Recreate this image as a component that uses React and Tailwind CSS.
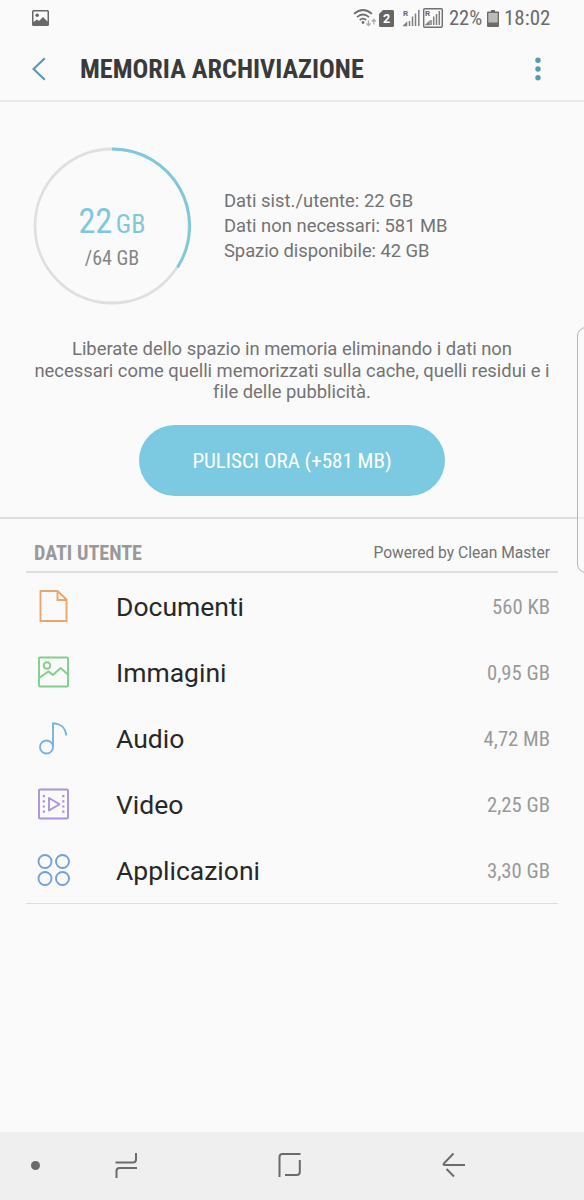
const condensed = "font-['Roboto_Condensed','Roboto',sans-serif] [font-stretch:75%]";

function PictureIcon() {
  return (
    <svg width="18" height="17" viewBox="0 0 18 17">
      <path fillRule="evenodd" fill="#686868" d="M1.5 0h14A1.5 1.5 0 0 1 17 1.500v13a1.500 1.500 0 0 1-1.500 1.500h-14A1.500 1.500 0 0 1 0 14.500v-13A1.500 1.500 0 0 1 1.500 0zM1.500 1.500v10.500l3.500-2.500 2 1.500 4-4 4.500 4.500v-10z" />
      <circle cx="5.200" cy="5.200" r="1.800" fill="#686868" />
    </svg>
  );
}

function WifiIcon() {
  return (
    <svg width="24" height="18" viewBox="0 0 24 18" fill="none" stroke="#707070" strokeWidth="1.700">
      <path d="M1 4.800Q10-2.800 19 4.800M4 8.200Q10 2.800 16 8.200M6.800 11Q10 8.200 13.200 11" />
      <circle cx="10" cy="13.500" r="1.400" fill="#707070" stroke="none" />
      <path d="M15.500 11.500v5m-2-2 2 2 2-2M20.800 15.500v-5m-2 2 2-2 2 2" stroke="#aaa" strokeWidth="1.300" />
    </svg>
  );
}

function Signal({ boxed }) {
  return (
    <svg width="20" height="20" viewBox="0 0 20 20" fill="none">
      {boxed && <rect x=".7" y=".7" width="18.600" height="18.600" rx="1" stroke="#707070" strokeWidth="1.400" />}
      <text x={boxed ? 2 : 0} y="8" fontSize="8" fontWeight="700" fontFamily="Roboto, sans-serif" fill="#666">R</text>
      <path d={boxed ? "M3.500 16.500h2.500v-2.500zM8 17v-5M10.700 17V8.500M13.500 17V6M16.300 17V3" : "M1 17.500h2.500v-2.500zM6.500 18v-5M9.500 18v-9.500M12.500 18V5.500M15.800 18V2"} stroke="#808080" strokeWidth="1.500" />
    </svg>
  );
}

function StatusBar() {
  return (
    <div className="flex h-9 items-center pl-8 pr-[33px]">
      <PictureIcon />
      <div className="ml-auto flex items-center text-[#6b6b6b]">
        <WifiIcon />
        <svg className="ml-0.5" width="15" height="17" viewBox="0 0 15 17">
          <path d="M4 0h9.500A1.500 1.500 0 0 1 15 1.500v14a1.500 1.500 0 0 1-1.500 1.500h-12A1.500 1.500 0 0 1 0 15.500V4z" fill="#666" />
          <text x="7.500" y="13" textAnchor="middle" fontSize="12.500" fontWeight="700" fontFamily="Roboto, sans-serif" fill="#fff">2</text>
        </svg>
        <div className="ml-[9px]"><Signal /></div>
        <Signal boxed />
        <span className={`${condensed} ml-1.5 w-[33px] whitespace-nowrap text-[20.500px] leading-none`}>22%</span>
        <svg className="ml-[5px]" width="12" height="17" viewBox="0 0 12 17">
          <path d="M4 0h4v1.500h3q1 0 1 1V16q0 1-1 1H1q-1 0-1-1V2.500q0-1 1-1h3z" fill="#6b6b6b" />
          <path d="M1.300 3h9.400v9.500H1.300z" fill="#bbb" />
        </svg>
        <span className={`${condensed} ml-[5px] w-[47px] whitespace-nowrap text-[21px] leading-none`}>18:02</span>
      </div>
    </div>
  );
}

function Header() {
  return (
    <header className="flex h-[66px] items-center border-b-2 border-[#e9e9e9] pl-8 pr-[43px] pt-0.5">
      <svg width="14" height="24" viewBox="0 0 14 24" fill="none" stroke="#559bb3" strokeWidth="2.200">
        <path d="M12.800 1.200 1.500 12l11.300 10.800" />
      </svg>
      <h1 className={`${condensed} ml-[34px] whitespace-nowrap pt-px text-[26.200px] font-bold leading-none text-[#3a3a3a]`}>MEMORIA ARCHIVIAZIONE</h1>
      <svg className="ml-auto" width="6" height="24" viewBox="0 0 6 24" fill="#559bb3">
        <circle cx="3" cy="3.300" r="2.700" />
        <circle cx="3" cy="12" r="2.700" />
        <circle cx="3" cy="20.700" r="2.700" />
      </svg>
    </header>
  );
}

function Usage() {
  return (
    <section className="flex h-[417px] flex-col border-b-2 border-[#dedede]">
      <div className="flex h-[225px] items-start pl-[33px] pt-[45px]">
        <div className="grid size-[158px] shrink-0">
          <svg className="col-start-1 row-start-1" width="158" height="158" viewBox="0 0 158 158" fill="none" strokeWidth="2.800">
            <circle cx="79" cy="79" r="77" stroke="#dfdfdf" />
            <path d="M79 2A77 77 0 0 1 144.500 120.500" stroke="#7ec8de" />
          </svg>
          <div className={`${condensed} col-start-1 row-start-1 flex flex-col items-center pt-[56px]`}>
            <div className="whitespace-nowrap leading-[36px] text-[#7ec8de]"><span className="text-[34.500px] tracking-[-0.400px]">22</span><span className="ml-1 text-[26px]">GB</span></div>
            <div className="-mt-0.5 whitespace-nowrap text-[20px] leading-7 text-[#858585]">/64 GB</div>
          </div>
        </div>
        <div className="ml-[33px] mt-[41px] whitespace-nowrap text-[18.400px] leading-[25px] text-[#737373]">
          <p>Dati sist./utente: 22 GB</p>
          <p>Dati non necessari: 581 MB</p>
          <p className="tracking-[-0.060px]">Spazio disponibile: 42 GB</p>
        </div>
      </div>
      <div className="mt-[11px] whitespace-nowrap text-center text-[18.400px] leading-[21.500px] tracking-[-0.010px] text-[#737373]">
        <p>Liberate dello spazio in memoria eliminando i dati non</p>
        <p>necessari come quelli memorizzati sulla cache, quelli residui e i</p>
        <p>file delle pubblicità.</p>
      </div>
      <button className={`${condensed} mx-auto mt-[22.600px] h-[71px] w-[306px] whitespace-nowrap rounded-full bg-[#7ccae1] pt-0.5 text-[21px] text-white`}>PULISCI ORA (+581 MB)</button>
    </section>
  );
}

const icons = {
  doc: <g stroke="#eaa66f"><path d="M3.500 1h17l9 8.500v21.500h-26zM20.500 1v9h9" /></g>,
  image: <g stroke="#83ce88"><rect x="2" y="1.500" width="29" height="29" rx="1" /><circle cx="10" cy="9.500" r="3.300" /><path d="M2 22l9.500-6.500 4.500 3.500 7.500-7 7.500 6.500" /></g>,
  audio: <g stroke="#78b5dd"><circle cx="9.500" cy="25" r="6.500" /><path d="M16 25V1.200C25 2 28.500 6 29.200 13.500" /></g>,
  video: <g stroke="#a994da"><rect x="2" y="1.500" width="29" height="29" rx="1" /><path d="M12 10v12.500l10.500-6.250z" strokeLinejoin="round" /><path d="M6.800 7v18M26.300 7v18" strokeDasharray="2.200 3" strokeWidth="2.200" /></g>,
  apps: <g stroke="#73a0dc"><circle cx="8" cy="7.500" r="6.500" /><circle cx="25.500" cy="7.500" r="6.500" /><circle cx="8" cy="24.500" r="6.500" /><circle cx="25.500" cy="24.500" r="6.500" /></g>,
};

const rows = [
  ["doc", "Documenti", "560 KB"],
  ["image", "Immagini", "0,95 GB"],
  ["audio", "Audio", "4,72 MB"],
  ["video", "Video", "2,25 GB"],
  ["apps", "Applicazioni", "3,30 GB"],
];

function UserData() {
  return (
    <section className="mx-[26px]">
      <div className="flex h-[54px] items-center justify-between border-b-2 border-[#dedede] pl-2 pr-2 pt-[16px]">
        <h2 className={`${condensed} whitespace-nowrap text-[20.100px] font-bold text-[#999]`}>DATI UTENTE</h2>
        <span className="whitespace-nowrap pt-0.5 text-[15.600px] text-[#737373]">Powered by Clean Master</span>
      </div>
      <ul className="h-[331px] border-b border-[#dedede]">
        {rows.map(([icon, name, size]) => (
          <li key={name} className="flex h-[66px] items-center pl-[11px] pr-2">
            <svg width="33" height="33" viewBox="0 0 33 33" fill="none" strokeWidth="1.900">{icons[icon]}</svg>
            <span className="ml-[46px] pt-0.5 text-[26.500px] leading-8 text-[#282828]">{name}</span>
            <span className={`${condensed} ml-auto whitespace-nowrap pt-1 text-[20.700px] text-[#999]`}>{size}</span>
          </li>
        ))}
      </ul>
    </section>
  );
}

function NavBar() {
  return (
    <nav className="mt-auto flex h-[68px] items-center bg-[#efefef] pl-[31px]">
      <span className="-mt-px size-[9px] rounded-full bg-[#6b6b6b]" />
      <svg className="ml-[74px]" width="25" height="28" viewBox="0 0 25 28" fill="none" stroke="#6b6b6b" strokeWidth="2">
        <path d="M1.500 10.500h17.500q3 0 3-3V1M2.500 26V19q0-3 3-3H23" />
      </svg>
      <svg className="ml-[138px]" width="26" height="28" viewBox="0 0 26 28" fill="none" stroke="#6b6b6b" strokeWidth="2">
        <path d="M2.500 25V5q0-3 3-3h18M22.800 8v12q0 3-3 3H8" />
      </svg>
      <svg className="ml-[138px]" width="26" height="28" viewBox="0 0 26 28" fill="none" stroke="#6b6b6b" strokeWidth="2">
        <path d="M12.500 1.500 2.800 11.500q-.8 1.500 1 1.500H24M5.500 17l7.500 7.500" />
      </svg>
    </nav>
  );
}

export default function App() {
  return (
    <main className="relative flex h-[1200px] w-[584px] flex-col overflow-hidden bg-[#fafafa] font-['Roboto',sans-serif]">
      <StatusBar />
      <Header />
      <Usage />
      <UserData />
      <NavBar />
      <div className="absolute -right-4 top-[327px] h-[246px] w-[23px] rounded-[9px] border border-[#b5b5b5] bg-[#fafafa]/60" />
    </main>
  );
}
